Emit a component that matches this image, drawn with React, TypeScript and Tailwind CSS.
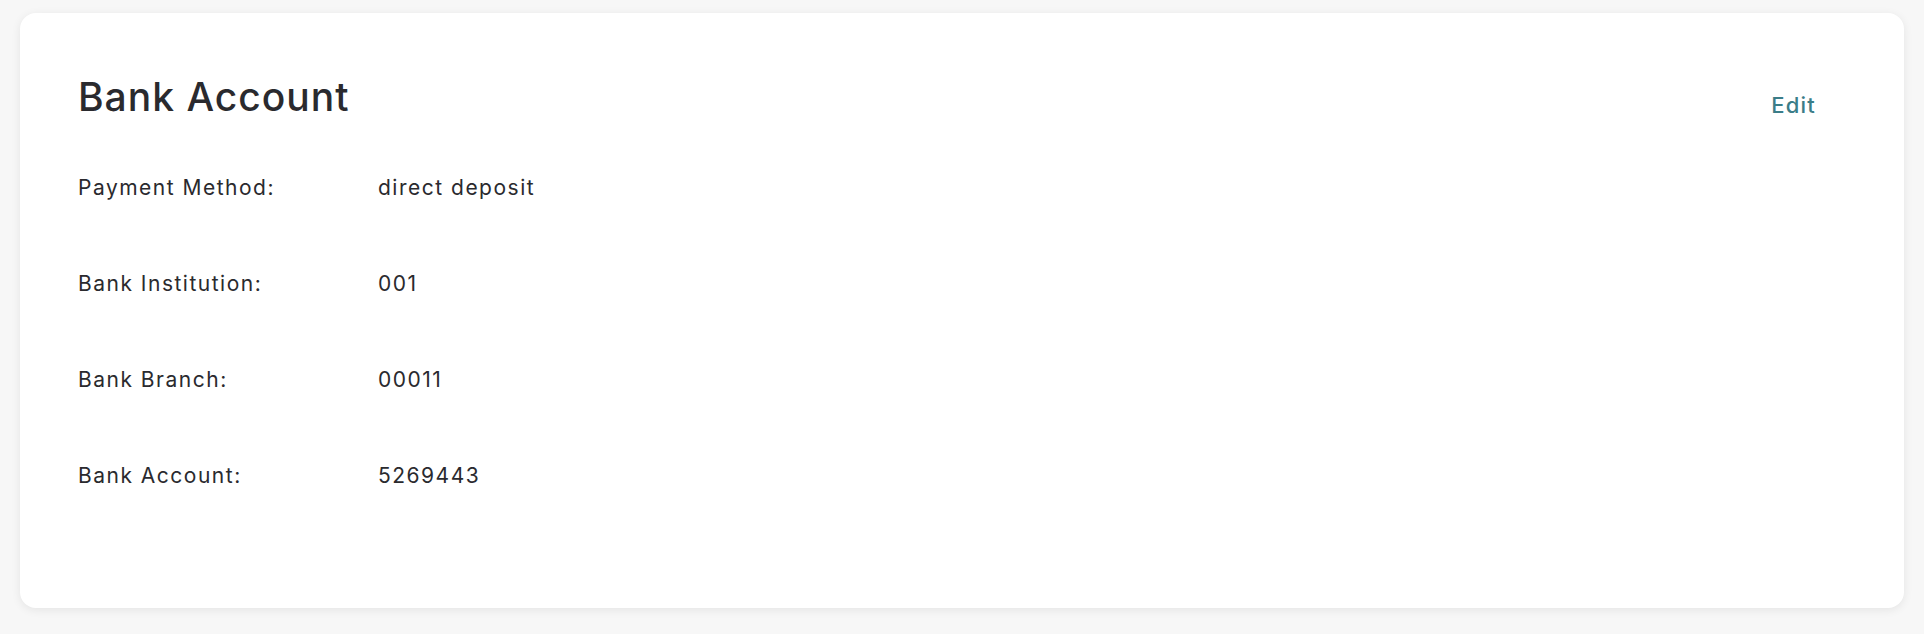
import React from "react";

const rows = [
  { label: "Payment Method:", value: "direct deposit" },
  { label: "Bank Institution:", value: "001" },
  { label: "Bank Branch:", value: "00011" },
  { label: "Bank Account:", value: "5269443" },
];

function BankAccountCard() {
  return (
    <div className="bg-white rounded-[16px] shadow-[0_2px_10px_rgba(0,0,0,0.08)] h-[595px] pl-[58px] pr-[88px] pt-[60px]">
      <div className="flex items-start justify-between">
        <h2 className="text-[39px] leading-[48px] font-medium text-[#2a2a2e] tracking-[1px]">Bank Account</h2>
        <button className="mt-[20px] text-[22px] leading-[25px] font-medium text-[#3b7d88] tracking-[1.2px]">Edit</button>
      </div>
      <div className="mt-[55px] flex flex-col gap-[72px]">
        {rows.map((row) => (
          <div key={row.label} className="grid grid-cols-[300px_1fr] text-[21px] leading-[24px] text-[#2a2a2e] tracking-[1.5px]">
            <span>{row.label}</span>
            <span>{row.value}</span>
          </div>
        ))}
      </div>
    </div>
  );
}

export default function App() {
  return (
    <div className="min-h-screen bg-[#f7f7f7] pt-[13px] px-[20px] pb-[26px]" style={{ fontFamily: "Inter, 'Noto Sans', sans-serif" }}>
      <BankAccountCard />
    </div>
  );
}
